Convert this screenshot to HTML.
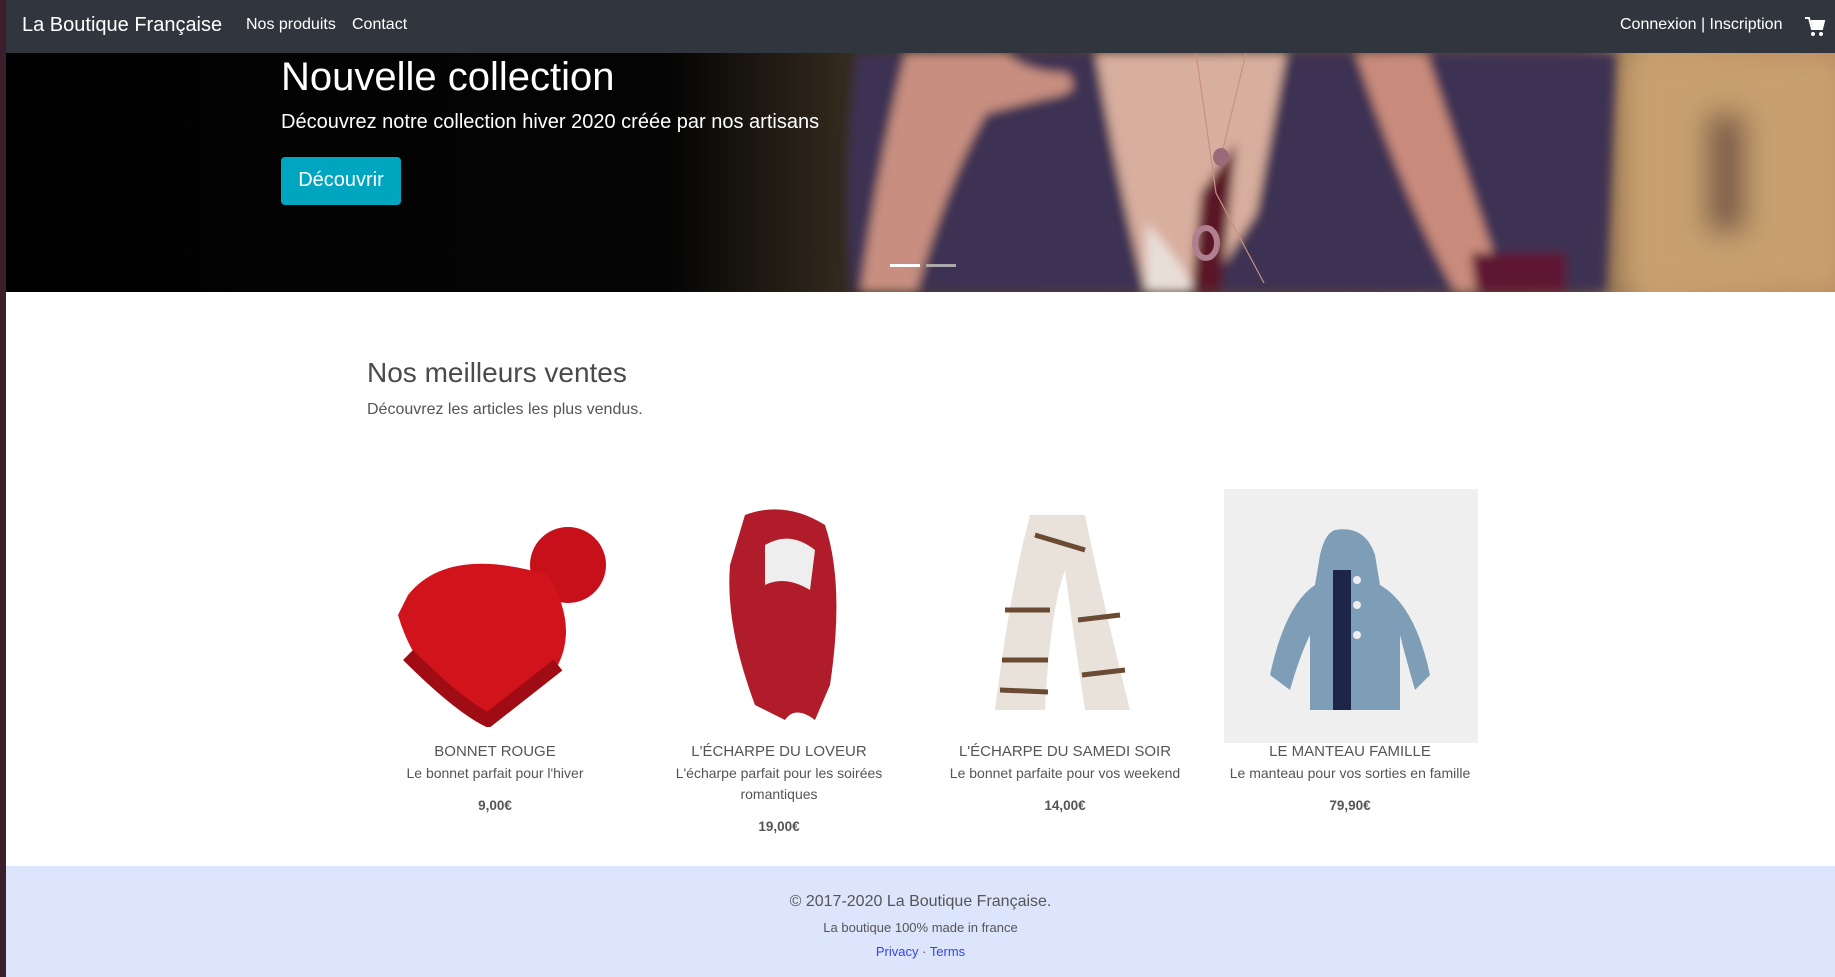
<!DOCTYPE html>
<html><head><meta charset="utf-8"><style>
*{margin:0;padding:0;box-sizing:border-box}
body{width:1835px;height:977px;overflow:hidden;font-family:"Liberation Sans",sans-serif;background:#fff;position:relative}
.strip{position:absolute;left:0;top:0;width:6px;height:977px;background:#3b1f2c}
nav{position:absolute;left:6px;top:0;right:0;height:53px;background:#31363e;color:#fff}
nav span{position:absolute;top:16px;font-size:16px}
.hero{position:absolute;left:6px;top:53px;right:0;height:239px;overflow:hidden;background:#020202}
.hero h1{position:absolute;left:275px;top:-8px;font-size:40px;font-weight:normal;color:#fff;line-height:1.6}
.hero p{position:absolute;left:275px;top:58px;font-size:20px;color:#fff}
.btn{position:absolute;left:275px;top:104px;width:120px;height:48px;background:#00a6c0;border-radius:4px;color:#fff;font-size:20px;text-align:center;line-height:46px}
.ind{position:absolute;top:211px;height:3px;width:30px}
h2{position:absolute;left:367px;top:357px;font-size:28px;font-weight:normal;color:#4a4a4a}
.sub{position:absolute;left:367px;top:401px;font-size:16px;color:#555}
.card{position:absolute;width:280px;text-align:center;color:#555}
.card .t{position:absolute;top:1px;width:100%;font-size:15px}
.card .d{position:absolute;top:21px;width:100%;font-size:14px;line-height:21px;color:#555}
.card .p{position:absolute;width:100%;font-size:13.5px;font-weight:bold}
footer{position:absolute;left:6px;right:0;top:866px;height:111px;background:#dde5fd;text-align:center;color:#555}
</style></head><body>
<div class="strip"></div>
<nav>
<span style="left:16px;top:14px;font-size:20px">La Boutique Française</span>
<span style="left:240px">Nos produits</span>
<span style="left:346px">Contact</span>
<span style="left:1614px">Connexion | Inscription</span>
<svg style="position:absolute;left:1798px;top:16px" width="22" height="22" viewBox="0 0 22 22"><path d="M1 2h4l3 11h10l2-8H7" fill="none" stroke="#fff" stroke-width="2"/><path d="M7 5h13l-2 8H9z" fill="#fff"/><circle cx="9" cy="18" r="2" fill="#fff"/><circle cx="17" cy="18" r="2" fill="#fff"/></svg>
</nav>
<div class="hero">
<svg style="position:absolute;left:0;top:0" width="1829" height="239">
<defs>
<linearGradient id="bg" x1="0" x2="1"><stop offset="0" stop-color="#020202"/><stop offset=".36" stop-color="#040404"/><stop offset=".44" stop-color="#2a2218"/><stop offset=".5" stop-color="#4a3a2c"/><stop offset=".86" stop-color="#6a5040"/><stop offset=".9" stop-color="#c49a68"/><stop offset="1" stop-color="#b8845a"/></linearGradient>
<filter id="b"><feGaussianBlur stdDeviation="5"/></filter>
<filter id="b2"><feGaussianBlur stdDeviation="14"/></filter>
</defs>
<rect width="1829" height="239" fill="url(#bg)"/>
<g filter="url(#b2)"><rect x="1620" y="0" width="220" height="239" fill="#c8a070"/><rect x="1700" y="60" width="40" height="120" fill="#7a5a48"/></g>
<g filter="url(#b)">
<path d="M850 0 L1610 0 L1600 239 L845 239 Q835 120 850 0Z" fill="#3c3352"/>
<path d="M1090 0 L1280 0 L1250 160 L1200 239 L1140 239 Q1110 120 1090 0Z" fill="#d8ae9e"/>
<path d="M1140 170 Q1170 200 1190 239 L1140 239Z" fill="#e8ded8"/>
<path d="M1195 140 L1230 90 L1215 239 L1185 239Z" fill="#5a1428"/>
<path d="M900 0 L1000 0 Q1020 20 1060 20 Q1080 40 1040 45 L980 60 Q940 130 910 239 L855 239 Q870 120 900 0Z" fill="#c88f80"/>
<path d="M1350 0 L1420 0 L1480 180 L1500 239 L1450 239 Q1400 150 1350 0Z" fill="#c98b7c"/>
<path d="M1465 200 L1560 200 L1560 239 L1470 239Z" fill="#5e1830"/>
</g>
<path d="M1190 0 L1210 140 L1258 230" stroke="#c89080" stroke-width="1.2" fill="none"/>
<path d="M1240 0 L1216 100" stroke="#c89080" stroke-width="1.2" fill="none"/>
<ellipse cx="1215" cy="104" rx="8" ry="9" fill="#9a6a78"/>
<ellipse cx="1200" cy="190" rx="11" ry="15" fill="none" stroke="#b08090" stroke-width="6"/>
</svg>
<h1>Nouvelle collection</h1>
<p>Découvrez notre collection hiver 2020 créée par nos artisans</p>
<div class="btn">Découvrir</div>
<div class="ind" style="left:884px;background:#fff"></div>
<div class="ind" style="left:920px;background:#aaa"></div>
</div>
<h2>Nos meilleurs ventes</h2>
<div class="sub">Découvrez les articles les plus vendus.</div>

<svg style="position:absolute;left:388px;top:505px" width="226" height="222"><ellipse cx="180" cy="60" rx="38" ry="38" fill="#c8101a"/><path d="M20 90 Q60 40 160 70 Q190 120 170 160 L100 215 Q30 180 10 110 Z" fill="#d1141c"/><path d="M20 150 Q70 200 100 215 L170 160" fill="none" stroke="#a00c14" stroke-width="14"/></svg>
<svg style="position:absolute;left:715px;top:505px" width="140" height="220"><path d="M30 10 Q70 -5 110 20 Q130 80 115 180 L100 215 Q80 200 70 215 L40 200 Q10 120 15 60 Z" fill="#b11c2a"/><path d="M50 40 Q75 25 100 45 L95 85 Q70 70 50 80 Z" fill="#eee"/></svg>
<svg style="position:absolute;left:990px;top:510px" width="150" height="210"><path d="M40 5 L95 5 Q110 80 140 200 L95 200 Q80 100 75 60 Q60 100 55 200 L5 200 Q20 80 40 5Z" fill="#e8e2da"/><g stroke="#6a4a32" stroke-width="5"><line x1="15" y1="100" x2="60" y2="100"/><line x1="88" y1="110" x2="130" y2="105"/><line x1="12" y1="150" x2="58" y2="150"/><line x1="92" y1="165" x2="135" y2="160"/><line x1="10" y1="180" x2="58" y2="182"/><line x1="45" y1="25" x2="95" y2="40"/></g></svg>
<div style="position:absolute;left:1224px;top:489px;width:254px;height:254px;background:#efefef"></div>
<svg style="position:absolute;left:1255px;top:525px" width="190" height="190"><path d="M80 5 Q110 0 120 30 L125 60 Q160 80 175 150 L160 165 Q150 130 145 110 L145 185 L55 185 L55 110 Q45 130 35 165 L15 150 Q30 80 60 60 L65 30 Q70 8 80 5Z" fill="#7e9db6"/><rect x="78" y="45" width="18" height="140" fill="#1d2548"/><circle cx="102" cy="55" r="4" fill="#eee"/><circle cx="102" cy="80" r="4" fill="#eee"/><circle cx="102" cy="110" r="4" fill="#eee"/></svg>

<div class="card" style="left:355px;top:742px"><div class="t">BONNET ROUGE</div><div class="d">Le bonnet parfait pour l'hiver</div><div class="p" style="top:56px">9,00€</div></div>
<div class="card" style="left:639px;top:742px"><div class="t">L'ÉCHARPE DU LOVEUR</div><div class="d">L'écharpe parfait pour les soirées romantiques</div><div class="p" style="top:77px">19,00€</div></div>
<div class="card" style="left:925px;top:742px"><div class="t">L'ÉCHARPE DU SAMEDI SOIR</div><div class="d">Le bonnet parfaite pour vos weekend</div><div class="p" style="top:56px">14,00€</div></div>
<div class="card" style="left:1210px;top:742px"><div class="t">LE MANTEAU FAMILLE</div><div class="d">Le manteau pour vos sorties en famille</div><div class="p" style="top:56px">79,90€</div></div>

<footer>
<div style="position:absolute;top:27px;width:100%;font-size:16px">© 2017-2020 La Boutique Française.</div>
<div style="position:absolute;top:54px;width:100%;font-size:13px">La boutique 100% made in france</div>
<div style="position:absolute;top:78px;width:100%;font-size:13px;color:#555"><span style="color:#3344ee">Privacy</span> · <span style="color:#3344ee">Terms</span></div>
</footer>
</body></html>
